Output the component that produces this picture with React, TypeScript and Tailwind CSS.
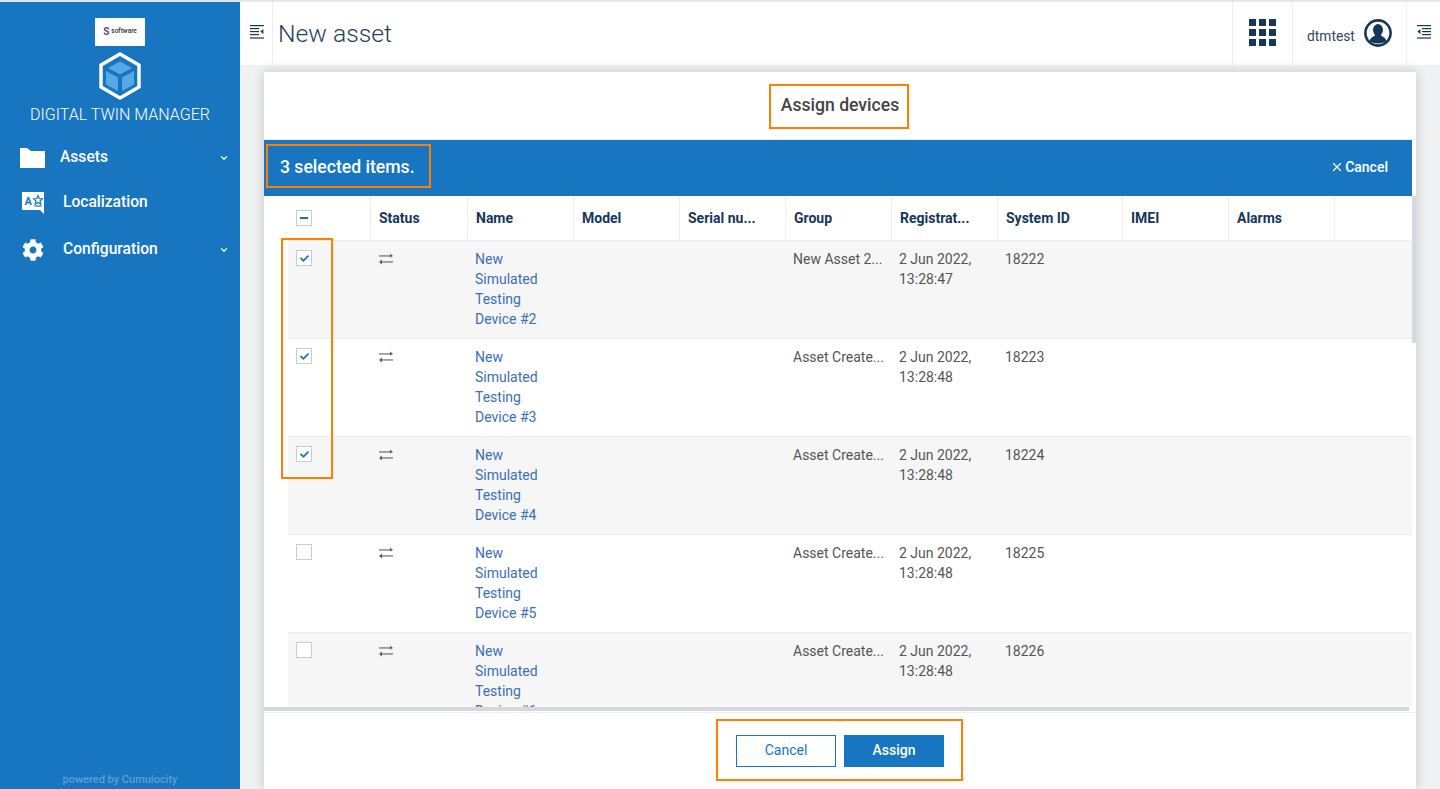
import { ChevronDown, X } from 'lucide-react';
import { FaCheck, FaCog } from 'react-icons/fa';

const devices = [
  { n: 2, group: 'New Asset 2...', time: '13:28:47', id: '18222', checked: true },
  { n: 3, group: 'Asset Create...', time: '13:28:48', id: '18223', checked: true },
  { n: 4, group: 'Asset Create...', time: '13:28:48', id: '18224', checked: true },
  { n: 5, group: 'Asset Create...', time: '13:28:48', id: '18225', checked: false },
  { n: 6, group: 'Asset Create...', time: '13:28:48', id: '18226', checked: false },
];

const columns = [
  { label: 'Status', w: 'w-[97px]' },
  { label: 'Name', w: 'w-[106px]' },
  { label: 'Model', w: 'w-[106px]' },
  { label: 'Serial nu...', w: 'w-[106px]' },
  { label: 'Group', w: 'w-[106px]' },
  { label: 'Registrat...', w: 'w-[106px]' },
  { label: 'System ID', w: 'w-[125px]' },
  { label: 'IMEI', w: 'w-[106px]' },
  { label: 'Alarms', w: 'w-[106px]' },
];

function MenuLines({ flip }: { flip?: boolean }) {
  // arrow points left in both; flip moves the arrow to the left side
  return (
    <svg width="14" height="14" viewBox="0 0 14 14" fill="#14375a" className="-translate-y-[2px]">
      <rect x="0" y="0" width="14" height="1.2" />
      <rect x={flip ? 5 : 0} y="3" width="9" height="1.2" />
      <rect x={flip ? 5 : 0} y="6" width="9" height="1.2" />
      <rect x={flip ? 5 : 0} y="9" width="9" height="1.2" />
      <rect x="0" y="12.4" width="14" height="1.2" />
      <path d={flip ? 'M3.4 4 L0.4 6.6 L3.4 9.2 Z' : 'M13.4 4 L10.4 6.6 L13.4 9.2 Z'} />
    </svg>
  );
}

function Cube() {
  return (
    <svg width="44" height="48" viewBox="0 0 44 48">
      <path d="M22 2 L41 13 V35 L22 46 L3 35 V13 Z" fill="none" stroke="#fff" strokeWidth="3.4" />
      <path d="M22 9.5 L34 16 L22 22.5 L10 16 Z" fill="#5aa7e8" />
      <path d="M8 19 L20 25.5 V39 L8 32.5 Z" fill="#5aa7e8" />
      <path d="M36 19 L24 25.5 V39 L36 32.5 Z" fill="#5aa7e8" />
    </svg>
  );
}

function Arrows() {
  return (
    <svg width="14" height="12" viewBox="0 0 14 12" fill="#5f5f5f">
      <rect x="0" y="2.4" width="12.5" height="1.1" />
      <path d="M11 0.4 L14 3 L11 4.6 Z" />
      <rect x="1.5" y="8.4" width="12.5" height="1.1" />
      <path d="M3 6.4 L0 9 L3 11.4 Z" />
    </svg>
  );
}

function Box({ state }: { state: 'on' | 'off' | 'some' }) {
  return (
    <div className="w-4 h-4 bg-white border border-[#cccccc] flex items-center justify-center">
      {state === 'on' && <FaCheck size={9} className="text-[#1776bf]" />}
      {state === 'some' && <div className="w-2 h-[2px] bg-[#1776bf]" />}
    </div>
  );
}

export default function App() {
  return (
    <div className="relative h-[789px] w-[1440px] overflow-hidden flex bg-[#f0f1f3] font-['Roboto',sans-serif] text-[14px] border-t-2 border-[#e4e5e6]">
      {/* sidebar */}
      <aside className="w-[240px] shrink-0 bg-[#1776bf] text-white flex flex-col">
        <div className="flex flex-col items-center pt-4">
          <div className="w-[50px] h-[28px] bg-white flex items-center justify-center gap-[2px] text-[#333] text-[6.5px] font-medium">
            <span className="text-[#5b3fb5] font-bold text-[10px] leading-none">S</span>
            <span>software</span>
          </div>
          <div className="mt-[6px]">
            <Cube />
          </div>
          <div className="mt-[5px] text-[16px] leading-5 font-light">DIGITAL TWIN MANAGER</div>
        </div>
        <nav className="mt-[11px] font-medium text-[15.6px]">
          <div className="h-[44px] flex items-center pl-5 pr-[11px]">
            <svg width="25" height="20" viewBox="0 0 25 20" fill="#fff">
              <path d="M0 0 H7 L11 3 H25 V20 H0 Z" />
            </svg>
            <span className="ml-[15px]">Assets</span>
            <ChevronDown size={10} strokeWidth={3} className="ml-auto" />
          </div>
          <div className="h-[46px] flex items-center pl-[22px] pr-[11px]">
            <svg width="23" height="23" viewBox="0 0 23 23">
              <path d="M0 0 H22 V22 L18 18 H0 Z" fill="#fff" />
              <text x="2.5" y="13" fontSize="11" fontWeight="700" fill="#1776bf">A</text>
              <path d="M16 3.5 L17.3 6.5 L20.5 6.8 L18 9 L18.8 12.2 L16 10.5 L13.2 12.2 L14 9 L11.5 6.8 L14.7 6.5 Z" fill="none" stroke="#1776bf" strokeWidth="1.2" />
              <path d="M12.5 14 H19.5" stroke="#1776bf" strokeWidth="1.2" />
            </svg>
            <span className="ml-[18px]">Localization</span>
          </div>
          <div className="h-[48px] flex items-center pl-[22px] pr-[11px]">
            <FaCog size={22} />
            <span className="ml-[19px]">Configuration</span>
            <ChevronDown size={10} strokeWidth={3} className="ml-auto" />
          </div>
        </nav>
        <div className="mt-auto pb-[1px] text-center text-[11px] text-[#5aa0d8] font-medium">powered by Cumulocity</div>
      </aside>

      <div className="flex-1 min-w-0 flex flex-col">
        {/* header */}
        <header className="h-[63px] shrink-0 bg-white flex items-stretch text-[#14375a]">
          <div className="w-[33px] pl-[1px] border-r border-[#eeeeee] flex items-center justify-center">
            <MenuLines />
          </div>
          <h1 className="pl-[5px] flex items-center text-[24.7px] font-light text-[#1f3f5f]">New asset</h1>
          <div className="ml-auto w-[60px] border-l border-[#eeeeee] flex items-center justify-center">
            <div className="grid grid-cols-3 gap-[3px] -translate-y-[1px]">
              {Array.from({ length: 9 }).map((_, i) => (
                <div key={i} className="w-[7px] h-[7px] bg-[#14375a]" />
              ))}
            </div>
          </div>
          <div className="w-[114px] border-l border-[#eeeeee] flex items-center pl-[14px] gap-[9px] text-[13.8px] text-[#33475b]">
            <span className="pt-[6px]">dtmtest</span>
            <svg width="28" height="28" viewBox="0 0 28 28" className="-translate-y-[1px]">
              <circle cx="14" cy="14" r="12.6" fill="none" stroke="#14375a" strokeWidth="2.6" />
              <ellipse cx="14" cy="11" rx="5" ry="6" fill="#14375a" />
              <path d="M5.5 22.5 C6 18.5 10 17.5 11.5 16 H16.5 C18 17.5 22 18.5 22.5 22.5 Q14 26.5 5.5 22.5 Z" fill="#14375a" />
            </svg>
          </div>
          <div className="w-[34px] border-l border-[#eeeeee] flex items-center justify-center">
            <MenuLines flip />
          </div>
        </header>

        {/* modal */}
        <div className="ml-6 mr-6 mt-[7px] flex-1 min-h-0 bg-white flex flex-col shadow-[0_0_12px_rgba(0,0,0,0.18)]">
          <div className="h-[68px] shrink-0 pb-[1px] border-b border-[#eeeeee] flex items-center justify-center text-[17.6px] font-medium text-[#444]">Assign devices</div>
          <div className="flex-1 min-h-0 flex flex-col pr-1 relative">
            <div className="h-[56px] shrink-0 pb-[2px] bg-[#1776bf] text-white flex items-center justify-between pl-4 pr-6">
              <span className="text-[17.6px] font-medium">3 selected items.</span>
              <span className="flex items-center gap-[1px] text-[14px] font-medium">
                <X size={14} strokeWidth={2.2} />
                Cancel
              </span>
            </div>
            <div className="flex-1 min-h-0 overflow-hidden pl-6">
              <div className="h-[45px] flex items-stretch border-b border-[#eeeeee]">
                <div className="w-[83px] pl-2 border-r border-[#eeeeee] flex items-center">
                  <Box state="some" />
                </div>
                {columns.map((c) => (
                  <div key={c.label} className={`${c.w} px-2 border-r border-[#eeeeee] flex items-center pt-[1px] text-[14px] font-bold text-[#14375a]`}>
                    {c.label}
                  </div>
                ))}
              </div>
              {devices.map((d, i) => (
                <div key={d.n} className={`h-[98px] shrink-0 flex border-b border-[#eeeeee] text-[14px] leading-5 text-[#555] ${i % 2 === 0 ? 'bg-[#f6f6f6]' : 'bg-white'}`}>
                  <div className="w-[82px] pl-2 pt-[9px]">
                    <Box state={d.checked ? 'on' : 'off'} />
                  </div>
                  <div className="w-[97px] pl-[9px] pt-[12px]">
                    <Arrows />
                  </div>
                  <div className="w-[106px] pl-2 pr-8 pt-[8px] text-[#3a70b5]">{`New Simulated Testing Device #${d.n}`}</div>
                  <div className="w-[106px]" />
                  <div className="w-[106px]" />
                  <div className="w-[106px] pl-2 pt-[8px] whitespace-nowrap">{d.group}</div>
                  <div className="w-[106px] pl-2 pt-[8px]">
                    2 Jun 2022,
                    <br />
                    {d.time}
                  </div>
                  <div className="w-[125px] pl-2 pt-[8px]">{d.id}</div>
                </div>
              ))}
            </div>
            <div className="h-1 shrink-0 ml-0 mr-[3px] mb-[1px] bg-[#d5d8dc]" />
            <div className="absolute right-0 top-[56px] w-1 h-[147px] bg-[#d5d8dc]" />
          </div>
          <div className="h-[77px] shrink-0 border-t border-[#eeeeee] flex items-start justify-center gap-2 pt-[22px]">
            <button className="w-[100px] h-8 pb-[1px] border border-[#1776bf] text-[#1776bf] bg-white text-[14px]">Cancel</button>
            <button className="w-[100px] h-8 pb-[1px] bg-[#1776bf] text-white text-[14px] font-medium">Assign</button>
          </div>
        </div>
      </div>

      {/* orange callouts */}
      <div className="absolute left-[769px] top-[82px] w-[140px] h-[45px] border-2 border-[#ff8000]" />
      <div className="absolute left-[266px] top-[142px] w-[165px] h-[44px] border-2 border-[#ff8000]" />
      <div className="absolute left-[281px] top-[236px] w-[52px] h-[241px] border-2 border-[#ff8000]" />
      <div className="absolute left-[716px] top-[717px] w-[247px] h-[62px] border-2 border-[#ff8000]" />
    </div>
  );
}
